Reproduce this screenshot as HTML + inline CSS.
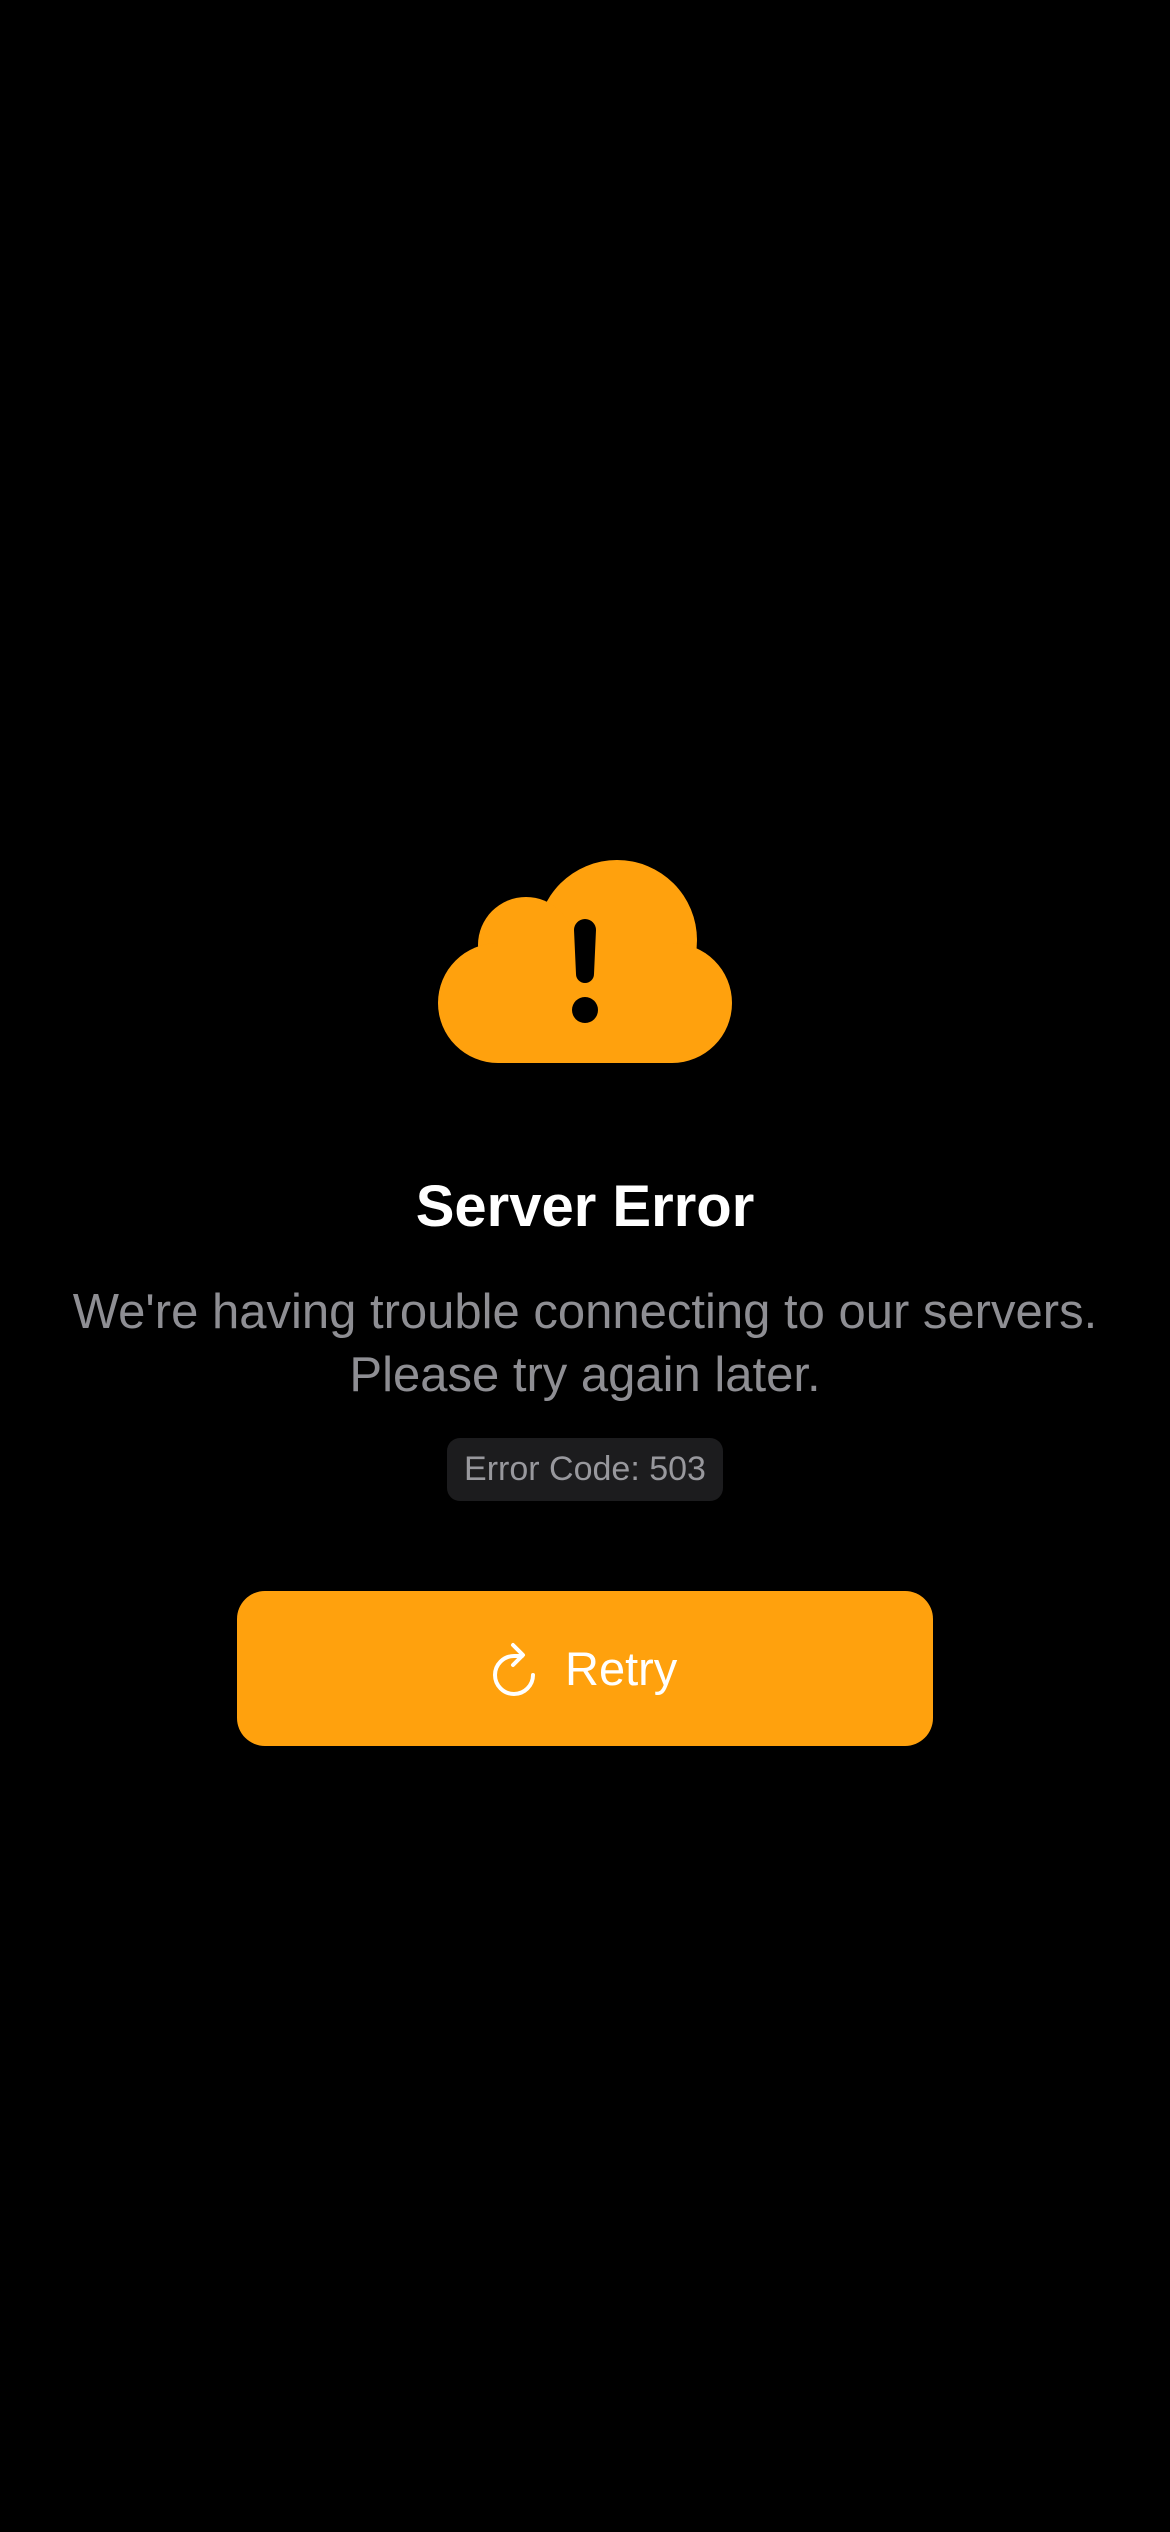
<!DOCTYPE html>
<html><head><meta charset="utf-8"><style>
html,body{margin:0;padding:0;background:#000;width:1170px;height:2532px;overflow:hidden;font-family:"Liberation Sans",sans-serif}
.abs{position:absolute;left:0;width:1170px;text-align:center}
</style></head><body>
<svg style="position:absolute;left:0;top:0" width="1170" height="1100">
<g fill="#FFA10D">
<circle cx="617" cy="940" r="80"/>
<circle cx="526" cy="945" r="48"/>
<circle cx="498" cy="1003" r="60"/>
<circle cx="672" cy="1003" r="60"/>
<rect x="498" y="943" width="174" height="120"/>
</g>
<path d="M574 930 A11 11 0 0 1 596 930 L594 974 A9 9 0 0 1 576 974 Z" fill="#000"/>
<circle cx="585" cy="1010" r="13" fill="#000"/>
</svg>
<div class="abs" style="top:1171px;font-size:58px;font-weight:bold;color:#fff;line-height:72px">Server Error</div>
<div class="abs" style="top:1281px;font-size:49px;color:#8e8e93;line-height:63px">We're having trouble connecting to our servers.<br>Please try again later.</div>
<div style="position:absolute;left:447px;top:1438px;width:276px;height:63px;background:#1c1c1e;border-radius:13px;color:#98989d;font-size:34px;line-height:63px;text-align:center">Error Code: 503</div>
<div style="position:absolute;left:237px;top:1591px;width:696px;height:155px;background:#FFA10D;border-radius:28px"></div>
<svg style="position:absolute;left:0;top:1620px" width="1170" height="100">
<path d="M533 55 A19 19 0 1 1 514 36 L522 36" fill="none" stroke="#fff" stroke-width="4" stroke-linecap="round"/>
<path d="M513 25 L523 35 L513 45" fill="none" stroke="#fff" stroke-width="4" stroke-linecap="round" stroke-linejoin="round"/>
</svg>
<div style="position:absolute;left:565px;top:1641px;font-size:47px;color:#fff;line-height:56px">Retry</div>
</body></html>
